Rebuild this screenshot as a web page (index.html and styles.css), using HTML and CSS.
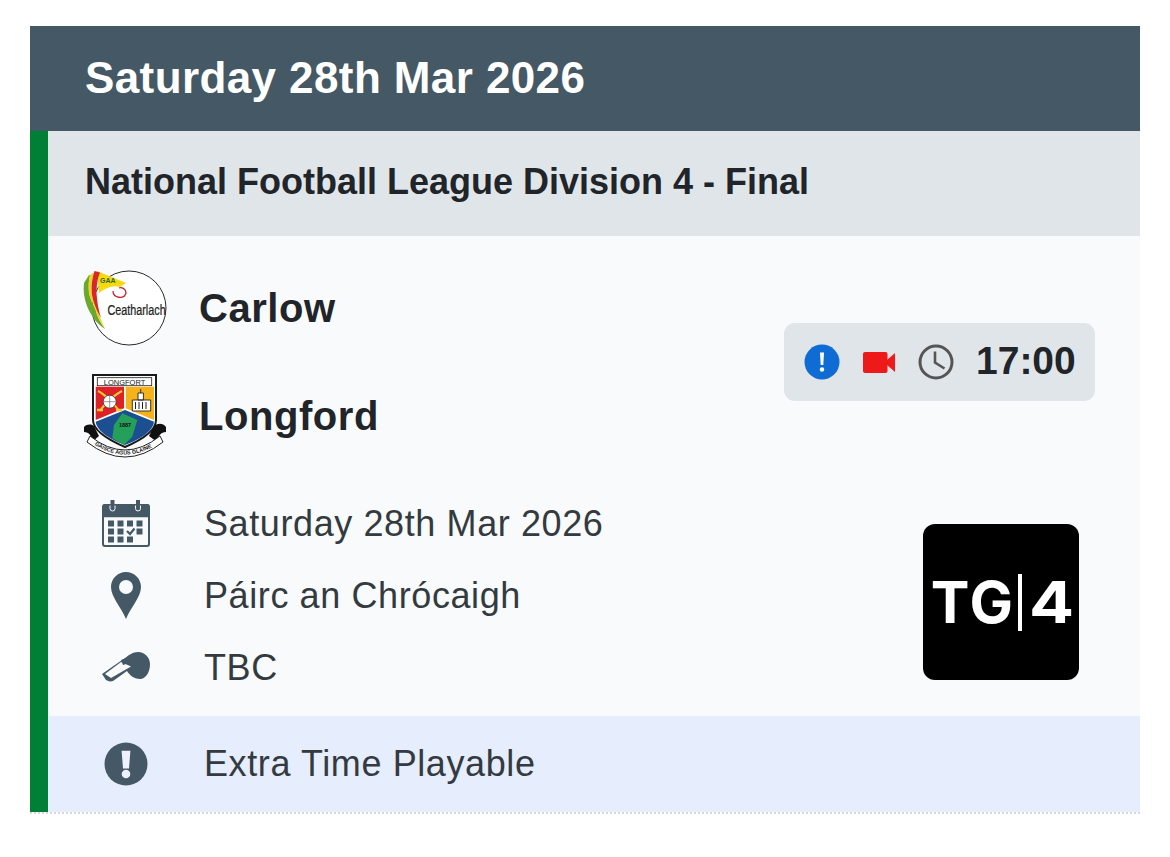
FILE: index.html
```html
<!DOCTYPE html>
<html lang="en">
<head>
<meta charset="utf-8">
<title>Fixture</title>
<link rel="stylesheet" href="styles.css">
</head>
<body>
<main class="card">
  <h1 class="date-header">Saturday 28th Mar 2026</h1>
  <div class="fixture">
    <h2 class="competition">National Football League Division 4 - Final</h2>
    <section class="match">
      <div class="teams">
        <div class="team">
          <svg class="crest" viewBox="0 0 86 84" aria-hidden="true">
            <circle cx="46" cy="42" r="37" fill="#fff" stroke="#2a2a2a" stroke-width="1"/>
            <path d="M14 5L43 17L37 21C30 19 24 21 16 27Z" fill="#f6d90f"/>
            <path d="M6 9L1 17C0 25 1 32 4 40C8 50 14 58 22 63C17 56 14 50 12.700 44C10 38 7 32 6 27C5.500 20 5.500 14 7 9Z" fill="#6aa82f"/>
            <path d="M10 7L7 9C5.500 14 5.500 20 6 27C7 32 10 38 12.700 44C14 50 17 56 22 63C19 56 16 50 15 44C12 38 9.500 32 8.700 27C8.300 20 9 13 11 7Z" fill="#f1d31f"/>
            <path d="M11.500 5L17 6.500C14.500 12 13.500 20 13.500 27C14 36 15.500 44 18 52C14 45 10 36 8.700 27C8.300 20 9 12 11.500 5Z" fill="#d8262a"/>
            <text x="17" y="17.300" class="crest-gaa">GAA</text>
            <path d="M30 25C30 32 41 34 43 27C43 23 39 21 36 22" fill="none" stroke="#c8232a" stroke-width="1.300"/>
            <text transform="translate(24.500 49) scale(.72 1)" class="crest-name">Ceatharlach</text>
          </svg>
          <span class="team-name">Carlow</span>
        </div>
        <div class="team">
          <svg class="crest" viewBox="0 0 86 84" aria-hidden="true">
            <path d="M10 1H73V46C73 58 56 67 42 73C28 67 10 58 10 46Z" fill="#fff" stroke="#1a1a1a" stroke-width="2"/>
            <rect x="14.300" y="3.700" width="54.400" height="8" fill="#fff" stroke="#1a1a1a" stroke-width=".8"/>
            <text x="41.500" y="10.600" class="crest-county" text-anchor="middle">LONGFORT</text>
            <path d="M12.700 12.700H41V34.300L12.700 46Z" fill="#df2027"/>
            <path d="M42.700 12.700H71V46L42.700 34.300Z" fill="#f5b21a"/>
            <path d="M12.700 47.700L42 36L71 47.700C70 58 55 66 42 71C29 66 14 58 12.700 47.700Z" fill="#1b4f92"/>
            <path d="M39.300 39.300L54.300 46L49.300 62.700L41 71L29.300 64.300L31 51Z" fill="#24a05a"/>
            <text x="42" y="53" class="crest-year" text-anchor="middle">1887</text>
            <path d="M15 17C21 20 31 29 36 37M39 17C33 20 22 29 17 37" fill="none" stroke="#f3c93a" stroke-width="2"/>
            <path d="M14 36H20M33 36H39" stroke="#f3c93a" stroke-width="2.500"/>
            <circle cx="26.700" cy="27.700" r="6.500" fill="#fff" stroke="#333" stroke-width=".8"/>
            <path d="M26.700 21.500V34M21 27.700H32.500" stroke="#555" stroke-width=".6"/>
            <path d="M57.700 15V19M55 19H60.400V26H55ZM49.300 26H67.700V37H49.300Z" fill="#fff" stroke="#222" stroke-width=".9"/>
            <path d="M52.500 28V35M56 28V35M59.500 28V35M63 28V35" stroke="#222" stroke-width="1"/>
            <path d="M1 53C4 50 8 50 11 52L16 62L9 68C9 62 6 58 1 58ZM83 53C80 49 75 49 71 52L66 62L74 68C75 62 78 58 83 58Z" fill="#111"/>
            <path d="M7 62Q42 90 77 62L80 68Q42 98 4 68Z" fill="#fff" stroke="#222" stroke-width="1"/>
            <path id="banner-line" d="M9 69Q42 92 76 69" fill="none"/>
            <text class="crest-motto"><textPath href="#banner-line" startOffset="4%">GAISCE AGUS GLAINE</textPath></text>
          </svg>
          <span class="team-name">Longford</span>
        </div>
      </div>
      <div class="time-pill">
        <svg class="pill-icon" viewBox="0 0 36 36" aria-hidden="true"><circle cx="18" cy="18" r="17.500" fill="#0f6cd4"/><path d="M16 8.500H20L19.300 21H16.700Z" fill="#fff"/><circle cx="18" cy="25.500" r="2.200" fill="#fff"/></svg>
        <svg class="cam" viewBox="0 0 32 21" aria-hidden="true"><rect width="24.500" height="21" rx="2" fill="#ee1a1a"/><path d="M24 8L32 1V20L24 13Z" fill="#ee1a1a"/></svg>
        <svg class="pill-icon" viewBox="0 0 36 36" aria-hidden="true"><circle cx="18" cy="18" r="16" fill="none" stroke="#555" stroke-width="3"/><path d="M17 7.500V18.500L26.500 24.500" fill="none" stroke="#555" stroke-width="2.600"/></svg>
        <span class="time">17:00</span>
      </div>
    </section>
    <section class="details">
      <ul class="detail-list">
        <li class="detail">
          <span class="detail-icon list-icon">
            <svg class="cal" viewBox="0 0 48 48" aria-hidden="true">
              <path d="M3 6H45Q47 6 47 8V45Q47 47 45 47H3Q1 47 1 45V8Q1 6 3 6Z" fill="#f9fafc" stroke="#455865" stroke-width="2"/>
              <path d="M3 5H45Q47.500 5 47.500 8V18.300H.5V8Q.5 5 3 5Z" fill="#455865"/>
              <path d="M8.500 1V9A2 2 0 0 0 12.500 9V1Z" fill="#455865"/>
              <path d="M34 1V9A2 2 0 0 0 38 9V1Z" fill="#455865"/>
              <path d="M8 6.500V9.500A2.500 2.500 0 0 0 13 9.500V6.500M33.500 6.500V9.500A2.500 2.500 0 0 0 38.500 9.500V6.500" fill="none" stroke="#f9fafc" stroke-width="1"/>
              <path d="M6 21.500h6v6H6zM15.500 21.500h6v6h-6zM25 21.500h6v6h-6zM34.500 21.500h6v6h-6zM6 29.500h6v6H6zM15.500 29.500h6v6h-6zM34.500 29.500h6v6h-6zM6 37.500h6v6H6zM15.500 37.500h6v6h-6zM25 37.500h6v6h-6z" fill="#455865"/>
              <path d="M25 32L28 35L32.500 29.500" fill="none" stroke="#455865" stroke-width="2.200"/>
            </svg>
          </span>
          <span class="detail-text">Saturday 28th Mar 2026</span>
        </li>
        <li class="detail">
          <span class="detail-icon list-icon">
            <svg class="pin" viewBox="0 0 30 47" aria-hidden="true"><path fill-rule="evenodd" d="M15 0C6.700 0 0 6.700 0 15C0 25 10 35 15 47C20 35 30 25 30 15C30 6.700 23.300 0 15 0ZM15 8A7 7 0 1 1 15 22A7 7 0 1 1 15 8Z" fill="#455865"/></svg>
          </span>
          <span class="detail-text">Páirc an Chrócaigh</span>
        </li>
        <li class="detail">
          <span class="detail-icon list-icon">
            <svg class="whistle" viewBox="0 0 48 30" aria-hidden="true"><path d="M0 22L23 6C27 3 31 0 36 0C43 0 48 6 48 12C48 20 44 27 38 27C33 27 28 24 25 19L11 29C8 30 6 29 4 28Z" fill="#455865"/><path d="M3 22L19 10L29 14.500L9 26Z" fill="#f9fafc"/><path d="M19 8L25 6L27 11L21 13Z" fill="#455865"/></svg>
          </span>
          <span class="detail-text">TBC</span>
        </li>
      </ul>
      <div class="tv-logo" aria-label="TG4"><span class="tv-tg">TG</span><i class="tv-bar"></i><span class="tv-four">4</span></div>
    </section>
    <section class="notice">
      <span class="detail-icon">
        <svg class="alert" viewBox="0 0 44 44" aria-hidden="true"><circle cx="22" cy="22" r="21.500" fill="#455865"/><path d="M17.600 8.700H26.400L25 26.500H19Z" fill="#eef1fb"/><circle cx="22" cy="32" r="4.300" fill="#eef1fb"/></svg>
      </span>
      <span class="detail-text">Extra Time Playable</span>
    </section>
  </div>
  <div class="dotted"></div>
</main>
</body>
</html>
```

FILE: styles.css
```css
* { box-sizing: border-box; }
html, body { margin: 0; padding: 0; background: #fff; }
body {
  padding: 26px 30px 0;
  font-family: "Liberation Sans", Arial, sans-serif;
  color: #333a40;
}
.card { width: 1110px; }
.date-header {
  margin: 0;
  height: 105px;
  padding: 0 0 2px 55px;
  display: flex;
  align-items: center;
  background: #455865;
  color: #fff;
  font-size: 44px;
  letter-spacing: .4px;
  font-weight: 700;
}
.fixture {
  border-left: 18px solid #008036;
  background: #f9fafc;
}
.competition {
  margin: 0;
  height: 105px;
  padding: 0 0 3px 37px;
  display: flex;
  align-items: center;
  background: #e0e5e9;
  color: #212529;
  font-size: 36px;
  font-weight: 700;
}
.match {
  height: 246px;
  padding: 29px 45px 0 35px;
  display: flex;
  justify-content: space-between;
  align-items: flex-start;
}
.teams { display: flex; flex-direction: column; gap: 22px; }
.team { display: flex; align-items: center; gap: 30px; height: 86px; }
.crest { width: 86px; height: 84px; flex: none; }
.crest-gaa { font-size: 7px; font-weight: 700; fill: #2a6a2c; }
.crest-name { font-size: 15px; fill: #222; stroke: #222; stroke-width: .25px; }
.crest-county { font-size: 7.500px; fill: #222; }
.crest-year { font-size: 5.500px; font-weight: 700; fill: #111; }
.crest-motto { font-size: 5.500px; font-weight: 700; fill: #222; }
.team-name { font-size: 40px; letter-spacing: .55px; font-weight: 700; color: #212529; }
.time-pill {
  width: 311px;
  height: 78px;
  margin-top: 58px;
  padding-left: 20px;
  display: flex;
  align-items: center;
  gap: 23px;
  background: #e0e5e9;
  border-radius: 11px;
}
.pill-icon { width: 36px; height: 36px; flex: none; }
.cam { width: 32px; height: 21px; flex: none; }
.time { margin: 0 0 3px -1px; font-size: 39px; font-weight: 700; color: #212529; }
.details {
  height: 234px;
  padding-right: 61px;
  display: flex;
  justify-content: space-between;
  align-items: center;
}
.detail-list { list-style: none; margin: 0; padding: 0 0 6px; display: flex; flex-direction: column; }
.detail, .notice {
  display: flex;
  align-items: center;
  font-size: 36px;
  color: #333a40;
}
.detail-text { letter-spacing: .6px; }
.detail { height: 72px; }
.detail-icon { width: 156px; flex: none; display: flex; justify-content: center; }
.list-icon { margin-bottom: 2px; }
.cal { width: 48px; height: 48px; }
.pin { width: 30px; height: 47px; }
.whistle { width: 48px; height: 30px; }
.alert { width: 44px; height: 44px; }
.tv-logo {
  width: 156px;
  height: 156px;
  margin-top: 6px;
  background: #000;
  border-radius: 12px;
  color: #fff;
  display: flex;
  align-items: center;
  justify-content: center;
  font-family: Inter, sans-serif;
  font-size: 58px;
  font-weight: 700;
}
.tv-tg { letter-spacing: 2px; }
.tv-four { display: block; transform: scaleX(1.15); }
.tv-bar { display: block; width: 4px; height: 57px; margin: 0 10px 0 3px; background: #fff; }
.notice { height: 96px; background: #e6edfd; }
.dotted { border-top: 2px dotted #d5d9e0; }
```
